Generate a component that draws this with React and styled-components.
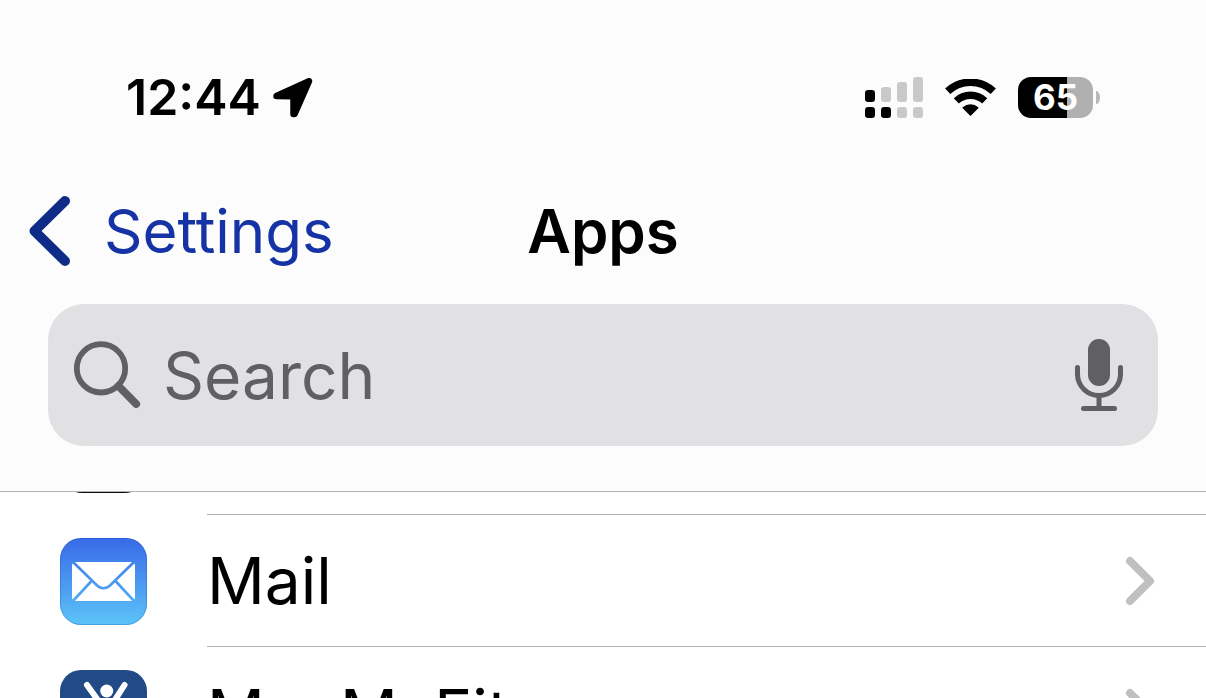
import React from "react";
import styled, { createGlobalStyle } from "styled-components";

const GlobalStyle = createGlobalStyle`
  * {
    box-sizing: border-box;
  }
  body {
    margin: 0;
    background-color: #ffffff;
    font-family: Inter, "Liberation Sans", sans-serif;
    color: #000000;
  }
`;

const Screen = styled.div`
  height: 100vh;
  overflow: hidden;
`;

const Header = styled.header`
  background-color: #fcfcfc;
  border-bottom: 1px solid #b2b2b4;
  padding-bottom: 45px;
`;

const StatusBar = styled.div`
  display: flex;
  align-items: center;
  justify-content: space-between;
  padding: 67px 106px 0 126px;
`;

const StatusGroup = styled.div`
  display: flex;
  align-items: center;
  gap: ${({ $gap }) => $gap}px;
`;

const Time = styled.time`
  font-size: 50px;
  font-weight: 600;
  line-height: 61px;
`;

const Battery = styled.div`
  display: flex;
  align-items: center;
  gap: 3px;
`;

const BatteryBody = styled.div`
  width: 75px;
  height: 41px;
  border-radius: 13px;
  background: linear-gradient(
    to right,
    #000000 ${({ $level }) => $level}%,
    #b0b0b0 ${({ $level }) => $level}%
  );
  color: #ffffff;
  font-size: 35px;
  font-weight: 700;
  line-height: 41px;
  text-align: center;
`;

const BatteryTip = styled.div`
  width: 4px;
  height: 13px;
  border-radius: 0 4px 4px 0 / 0 7px 7px 0;
  background-color: #b8b8b8;
`;

const NavBar = styled.nav`
  display: grid;
  grid-template-columns: 1fr auto 1fr;
  align-items: center;
  padding: 63px 27px 33px;
`;

const BackLink = styled.a`
  display: flex;
  align-items: center;
  gap: 33px;
  color: #1533a4;
  font-size: 60px;
  line-height: 80px;
  text-decoration: none;
`;

const Title = styled.h1`
  margin: 0;
  font-size: 60px;
  font-weight: 600;
  line-height: 80px;
`;

const SearchBar = styled.div`
  display: flex;
  align-items: center;
  gap: 21px;
  height: 142px;
  margin: 0 48px;
  padding: 0 34px 0 26px;
  border-radius: 36px;
  background-color: #e1e1e3;
  color: #5f5f64;
`;

const SearchInput = styled.input`
  flex: 1;
  min-width: 0;
  height: 82px;
  padding: 0;
  border: 0;
  outline: none;
  background: transparent;
  color: #000000;
  font-family: inherit;
  font-size: 64px;
  &::placeholder {
    color: #5f5f64;
    opacity: 1;
  }
`;

const IconButton = styled.button`
  display: flex;
  padding: 0;
  border: 0;
  background: none;
  color: inherit;
`;

const AppList = styled.ul`
  margin: 0;
  padding: 0;
  list-style: none;
`;

const ScrolledRow = styled.li`
  display: flex;
  align-items: flex-end;
  height: 23px;
  padding: 0 0 22px 60px;
  overflow: hidden;
  background: linear-gradient(#b2b2b4, #b2b2b4) 207px 100% / 100% 1px no-repeat;
`;

const ScrolledIcon = styled.div`
  flex: none;
  width: 87px;
  height: 87px;
  border-radius: 22px;
  background-color: #0c0c0e;
`;

const Row = styled.a`
  display: flex;
  color: inherit;
  text-decoration: none;
`;

const IconCell = styled.div`
  flex: none;
  display: flex;
  padding: 23px 60px 22px;
`;

const RowContent = styled.div`
  flex: 1;
  display: flex;
  align-items: center;
  justify-content: space-between;
  padding-right: 49px;
  border-bottom: 1px solid #b2b2b4;
`;

const AppName = styled.span`
  font-size: 64px;
  line-height: 82px;
`;

const LocationIcon = () => (
  <svg width="40" height="40" viewBox="273 79 40 40" aria-hidden="true">
    <path
      d="M276.5 97 L309 82.2 L294.6 115 L293.5 115 L293.5 97.2 Z"
      fill="#000"
      stroke="#000"
      strokeWidth="6.5"
      strokeLinejoin="round"
    />
  </svg>
);

const SignalIcon = () => (
  <svg width="58" height="41" viewBox="0 0 58 41" aria-hidden="true">
    <rect x="0" y="13" width="10" height="12" rx="3.2" />
    <g fill="#c9c9c9">
      <rect x="16" y="10" width="10" height="15" rx="3.2" />
      <rect x="32" y="5" width="10" height="20" rx="3.2" />
      <rect x="48" y="0" width="10" height="25" rx="3.2" />
      <rect x="32" y="30" width="10" height="11" rx="3.2" />
      <rect x="48" y="30" width="10" height="11" rx="3.2" />
    </g>
    <rect x="0" y="30" width="10" height="11" rx="3.2" />
    <rect x="16" y="30" width="10" height="11" rx="3.2" />
  </svg>
);

const WifiIcon = () => (
  <svg width="51" height="37" viewBox="0 0 51 37" aria-hidden="true">
    <g fill="none" stroke="#000">
      <path d="M2.7 12.3 A33.3 33.3 0 0 1 48.3 12.3" strokeWidth="7.6" />
      <path d="M11.3 21.9 A20.7 20.7 0 0 1 39.7 21.9" strokeWidth="7.4" />
    </g>
    <path
      d="M25.5 36 L18.3 28.8 A10.5 10.5 0 0 1 32.7 28.8 Z"
      stroke="#000"
      strokeWidth="1.6"
      strokeLinejoin="round"
    />
  </svg>
);

const BackChevron = () => (
  <svg width="44" height="72" viewBox="0 0 44 72" aria-hidden="true">
    <path
      d="M38 6 L7.5 36 L38 66"
      fill="none"
      stroke="#0f2b88"
      strokeWidth="10"
      strokeLinecap="round"
      strokeLinejoin="round"
    />
  </svg>
);

const SearchIcon = () => (
  <svg width="68" height="68" viewBox="0 0 68 68" aria-hidden="true">
    <g fill="none" stroke="currentColor">
      <circle cx="27" cy="27.3" r="24.2" strokeWidth="5.8" />
      <path d="M44.5 45 L62.2 63" strokeWidth="7.8" strokeLinecap="round" />
    </g>
  </svg>
);

const MicIcon = () => (
  <svg width="50" height="74" viewBox="0 0 50 74" aria-hidden="true">
    <rect x="14" y="1" width="22" height="47" rx="11" fill="currentColor" />
    <g
      fill="none"
      stroke="currentColor"
      strokeWidth="5"
      strokeLinecap="round"
    >
      <path d="M3.5 29.5 V36 A21.5 21.5 0 0 0 46.5 36 V29.5" />
      <path d="M25 58 V70" />
      <path d="M9.5 70.5 H40.5" />
    </g>
  </svg>
);

const MailIcon = () => (
  <svg width="87" height="87" viewBox="0 0 87 87" aria-hidden="true">
    <defs>
      <linearGradient id="mail" x1="0" y1="0" x2="0" y2="87" gradientUnits="userSpaceOnUse">
        <stop offset="0" stopColor="#386ae8" />
        <stop offset="1" stopColor="#5cc4f8" />
      </linearGradient>
    </defs>
    <rect width="87" height="87" rx="21" fill="url(#mail)" />
    <rect
      x="0.5"
      y="0.5"
      width="86"
      height="86"
      rx="20.5"
      fill="none"
      stroke="#1c4f9c"
      strokeOpacity="0.3"
    />
    <rect x="12" y="24" width="63" height="39" rx="4" fill="#fff" />
    <g fill="none" stroke="url(#mail)" strokeWidth="2.6">
      <path d="M13 24 L35.5 46 Q43.5 54.5 51.5 46 L74 24" />
      <path d="M31.5 43 L13 63" />
      <path d="M55.5 43 L74 63" />
    </g>
  </svg>
);

const FitnessIcon = () => (
  <svg width="87" height="87" viewBox="0 0 87 87" aria-hidden="true">
    <rect width="87" height="87" rx="21" fill="#214a86" />
    <circle cx="46.7" cy="21" r="6.5" fill="#fff" />
    <path
      d="M27 15 L40 33 V68 M64.5 15 L53 33 V68"
      fill="none"
      stroke="#fff"
      strokeWidth="6"
      strokeLinecap="round"
      strokeLinejoin="round"
    />
    <path d="M38 32 H55 V52 H38 Z" fill="#fff" />
  </svg>
);

const RowChevron = () => (
  <svg width="32" height="50" viewBox="0 0 32 50" aria-hidden="true">
    <path
      d="M5 5 L25 25 L5 45"
      fill="none"
      stroke="#c0c0c0"
      strokeWidth="8"
      strokeLinecap="round"
      strokeLinejoin="round"
    />
  </svg>
);

const apps = [
  { name: "Mail", Icon: MailIcon },
  { name: "MapMyFitness", Icon: FitnessIcon },
];

const AppRow = ({ name, Icon }) => (
  <li>
    <Row href="#">
      <IconCell>
        <Icon />
      </IconCell>
      <RowContent>
        <AppName>{name}</AppName>
        <RowChevron />
      </RowContent>
    </Row>
  </li>
);

const App = () => (
  <Screen>
    <GlobalStyle />
    <Header>
      <StatusBar>
        <StatusGroup $gap={12}>
          <Time>12:44</Time>
          <LocationIcon />
        </StatusGroup>
        <StatusGroup $gap={22}>
          <SignalIcon />
          <WifiIcon />
          <Battery>
            <BatteryBody $level={65}>65</BatteryBody>
            <BatteryTip />
          </Battery>
        </StatusGroup>
      </StatusBar>
      <NavBar>
        <BackLink href="#">
          <BackChevron />
          Settings
        </BackLink>
        <Title>Apps</Title>
      </NavBar>
      <SearchBar>
        <SearchIcon />
        <SearchInput type="text" placeholder="Search" aria-label="Search" />
        <IconButton type="button" aria-label="Dictate">
          <MicIcon />
        </IconButton>
      </SearchBar>
    </Header>
    <AppList>
      <ScrolledRow>
        <ScrolledIcon />
      </ScrolledRow>
      {apps.map(({ name, Icon }) => (
        <AppRow key={name} name={name} Icon={Icon} />
      ))}
    </AppList>
  </Screen>
);

export default App;
